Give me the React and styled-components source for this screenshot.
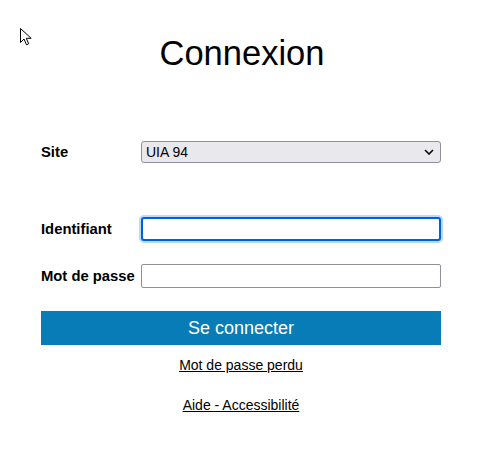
import React from "react";
import styled, { createGlobalStyle } from "styled-components";

const GlobalStyle = createGlobalStyle`
  body {
    margin: 0;
    background: #fff;
    font-family: "Liberation Sans", Arial, sans-serif;
    color: #000;
  }
`;

export default function App() {
  return (
    <>
      <GlobalStyle />
      <Page>
        <Cursor viewBox="0 0 13 18" width="13" height="18">
          <path
            d="M0.5 0.5 L0.5 14.5 L4 11 L6.5 16.8 L8.7 15.8 L6.3 10.3 L11.2 10.3 Z"
            fill="#fff"
            stroke="#000"
            strokeWidth="1"
            strokeLinejoin="miter"
          />
        </Cursor>
        <Title>Connexion</Title>
        <Form onSubmit={(e) => e.preventDefault()}>
          <Row>
            <Label htmlFor="site">Site</Label>
            <SelectWrap>
              <Select id="site" defaultValue="uia94">
                <option value="uia94">UIA 94</option>
              </Select>
              <Chevron viewBox="0 0 10 6" width="10" height="6">
                <path d="M1 1 L5 5 L9 1" fill="none" stroke="#000" strokeWidth="1.6" />
              </Chevron>
            </SelectWrap>
          </Row>
          <Row $top={54}>
            <Label htmlFor="login">Identifiant</Label>
            <Input id="login" type="text" $focused />
          </Row>
          <Row $top={23}>
            <Label htmlFor="pwd">Mot de passe</Label>
            <Input id="pwd" type="password" />
          </Row>
          <Submit type="submit">Se connecter</Submit>
          <Links>
            <Link href="#">Mot de passe perdu</Link>
            <Link href="#">Aide - Accessibilité</Link>
          </Links>
        </Form>
      </Page>
    </>
  );
}

const Page = styled.div`
  position: relative;
  width: 486px;
  height: 449px;
  padding-top: 33px;
  box-sizing: border-box;
`;

const Cursor = styled.svg`
  position: absolute;
  left: 20px;
  top: 28px;
`;

const Title = styled.h1`
  margin: 0 0 0 -2px;
  text-align: center;
  font-size: 34.5px;
  font-weight: normal;
  line-height: 40px;
`;

const Form = styled.form`
  width: 400px;
  margin: 68px 0 0 41px;
  display: flex;
  flex-direction: column;
`;

const Row = styled.div`
  display: flex;
  align-items: center;
  margin-top: ${(p) => (p.$top ? `${p.$top}px` : "0")};
`;

const Label = styled.label`
  width: 100px;
  font-size: 14.8px;
  font-weight: bold;
  flex-shrink: 0;
`;

const SelectWrap = styled.div`
  position: relative;
  flex: 1;
  display: flex;
`;

const Select = styled.select`
  appearance: none;
  width: 100%;
  height: 22px;
  padding: 0 4px;
  border: 1px solid #8f8f9d;
  border-radius: 3px;
  background: #e9e9ed;
  font-family: "Liberation Sans", Arial, sans-serif;
  font-size: 14px;
  color: #000;
`;

const Chevron = styled.svg`
  position: absolute;
  right: 7px;
  top: 8px;
  pointer-events: none;
`;

const Input = styled.input`
  flex: 1;
  height: 24px;
  box-sizing: border-box;
  border: ${(p) => (p.$focused ? "2px solid #0060df" : "1px solid #8f8f9d")};
  border-radius: ${(p) => (p.$focused ? "3px" : "2px")};
  box-shadow: ${(p) => (p.$focused ? "0 0 0 2px #b9dcf6" : "none")};
  outline: none;
  font-size: 13.5px;
  padding: 0 4px;
`;

const Submit = styled.button`
  margin-top: 23px;
  height: 34px;
  border: none;
  background: #077cb6;
  color: #fff;
  font-family: "Liberation Sans", Arial, sans-serif;
  font-size: 18px;
  cursor: pointer;
`;

const Links = styled.div`
  display: flex;
  flex-direction: column;
  align-items: center;
  gap: 24px;
  margin-top: 12px;
`;

const Link = styled.a`
  color: #000;
  font-size: 14px;
  line-height: 16px;
  text-decoration: underline;
`;
